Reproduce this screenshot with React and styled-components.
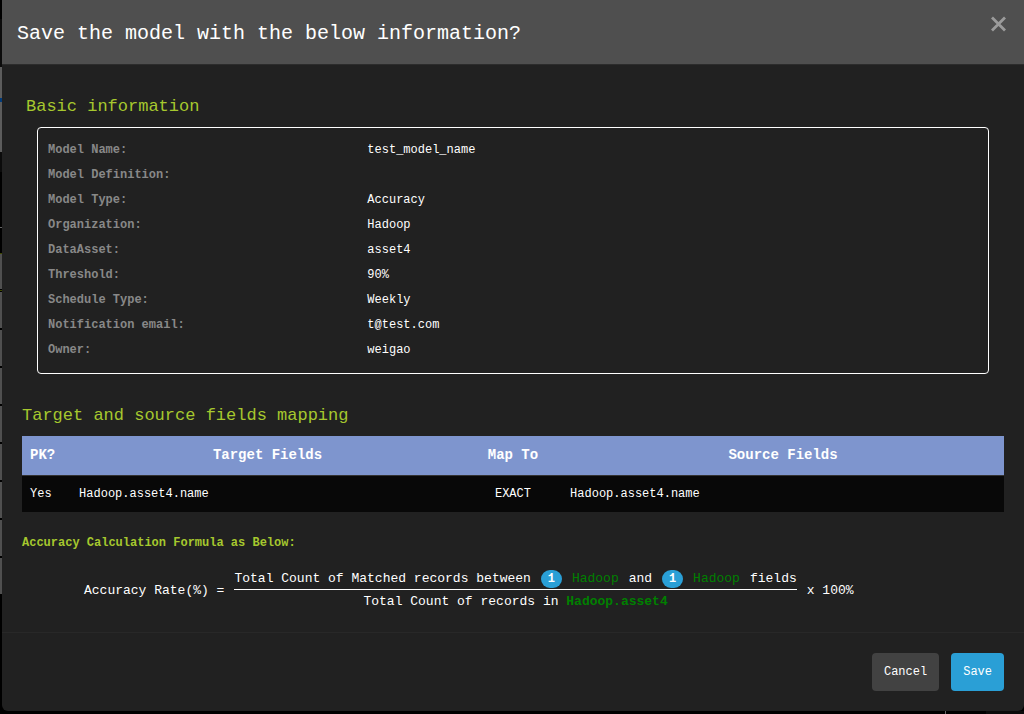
import React from "react";
import styled, { createGlobalStyle } from "styled-components";

const GlobalStyle = createGlobalStyle`
  *, *::before, *::after { box-sizing: border-box; }
  body {
    margin: 0;
    background: #000;
    color: #fff;
    font: 12px/16px "Liberation Mono", "Noto Sans CJK SC", monospace;
  }
`;

const strip = (from, to, color) =>
  `linear-gradient(${color}, ${color}) 0 ${from}px / 2px ${to - from}px no-repeat`;

const Backdrop = styled.div`
  min-height: 100vh;
  padding: 0 0 3px 2px;
  background: ${[
    strip(98, 102, "#003a7a"),
    strip(67, 152, "#5c5c5c"),
    strip(19, 172, "#0b0b0b"),
    strip(227, 228, "#666"),
    strip(253, 254, "#3f4a00"),
    strip(290, 291, "#3f4a00"),
    ...[253, 292, 330, 368, 406, 444, 482, 520, 558].map((y) =>
      strip(y, y + 36, "#505050")
    ),
    "linear-gradient(#666, #666) right 78px bottom 0 / 1px 3px no-repeat",
    "linear-gradient(#0b0b0b, #0b0b0b) right 0 bottom 0 / 38px 3px no-repeat",
  ].join(", ")};
`;

const Dialog = styled.section`
  display: flex;
  flex-direction: column;
  min-height: calc(100vh - 3px);
  background: #212121;
  border-radius: 0 0 6px 6px;
  overflow: hidden;
`;

const Header = styled.header`
  display: flex;
  justify-content: space-between;
  align-items: flex-start;
  padding: 16px 15px 12px;
  background: #4f4f4f;
  border-bottom: 1px solid #2c2c2c;
`;

const Title = styled.h1`
  margin: 0;
  font-size: 20px;
  line-height: 36px;
  font-weight: 400;
`;

const CloseButton = styled.button`
  display: flex;
  padding: 0;
  border: 0;
  background: none;
  color: #9b9b9b;
  cursor: pointer;
`;

const Body = styled.div`
  flex: 1;
  padding: 30px 20px 18px;
`;

const SectionTitle = styled.h2`
  margin: 0;
  padding-left: ${(p) => (p.$inset ? "4px" : "0")};
  color: #a6c82e;
  font-size: 17px;
  line-height: 24px;
  font-weight: 400;
`;

const InfoPanel = styled.dl`
  margin: 8px 15px 30px;
  padding: 10px 10px;
  border: 1px solid #fff;
  border-radius: 4px;
`;

const InfoRow = styled.div`
  display: grid;
  grid-template-columns: 1fr 2fr;
  column-gap: 14px;
  min-height: 25px;
  line-height: 25px;
`;

const InfoLabel = styled.dt`
  color: #888;
  font-weight: 700;
`;

const InfoValue = styled.dd`
  margin: 0;
`;

const MappingTable = styled.table`
  width: 100%;
  margin: 8px 0 22px;
  border-collapse: collapse;
  table-layout: fixed;
`;

const HeadCell = styled.th`
  width: ${(p) => p.$width};
  height: 39px;
  padding: 0 8px;
  background: #7e95ce;
  border-bottom: 1px solid #333;
  font-size: 14px;
  text-align: ${(p) => p.$align || "center"};
`;

const Cell = styled.td`
  height: 37px;
  padding: 0 8px;
  background: #080808;
  text-align: ${(p) => p.$align || "left"};
`;

const FormulaTitle = styled.h3`
  margin: 0;
  color: #a6c82e;
  font-size: 12px;
  line-height: 18px;
`;

const Formula = styled.div`
  display: flex;
  align-items: center;
  gap: 10px;
  margin: 16px 0 0 62px;
  font-size: 13px;
  white-space: nowrap;
`;

const Fraction = styled.div`
  text-align: center;
`;

const Numerator = styled.div`
  display: flex;
  align-items: center;
  gap: 10px;
  height: 22px;
  border-bottom: 1px solid #fff;
`;

const Denominator = styled.div`
  line-height: 24px;
`;

const Badge = styled.span`
  width: 21px;
  height: 18px;
  border-radius: 10px;
  background: #2a9fd6;
  font-size: 12px;
  line-height: 18px;
  font-weight: 700;
  text-align: center;
`;

const Source = styled.span`
  color: green;
  font-weight: ${(p) => (p.$strong ? 700 : 400)};
`;

const Footer = styled.footer`
  display: flex;
  justify-content: flex-end;
  gap: 12px;
  padding: 20px;
  border-top: 1px solid #282828;
`;

const Button = styled.button`
  height: 38px;
  padding: 0 12px;
  border: 0;
  border-radius: 4px;
  background: ${(p) => (p.$primary ? "#2a9fd6" : "#424242")};
  color: #fff;
  font: inherit;
  cursor: pointer;
`;

const info = [
  ["Model Name:", "test_model_name"],
  ["Model Definition:", ""],
  ["Model Type:", "Accuracy"],
  ["Organization:", "Hadoop"],
  ["DataAsset:", "asset4"],
  ["Threshold:", "90%"],
  ["Schedule Type:", "Weekly"],
  ["Notification email:", "t@test.com"],
  ["Owner:", "weigao"],
];

export default function App() {
  return (
    <>
      <GlobalStyle />
      <Backdrop>
        <Dialog role="dialog" aria-labelledby="dialog-title">
          <Header>
            <Title id="dialog-title">Save the model with the below information?</Title>
            <CloseButton type="button" aria-label="Close">
              <svg width="21" height="16" viewBox="0 0 21 16" aria-hidden="true">
                <path
                  d="M4 1.5 L17 14.5 M17 1.5 L4 14.5"
                  stroke="currentColor"
                  strokeWidth="2.8"
                />
              </svg>
            </CloseButton>
          </Header>
          <Body>
            <SectionTitle $inset>Basic information</SectionTitle>
            <InfoPanel>
              {info.map(([label, value]) => (
                <InfoRow key={label}>
                  <InfoLabel>{label}</InfoLabel>
                  <InfoValue>{value}</InfoValue>
                </InfoRow>
              ))}
            </InfoPanel>
            <SectionTitle>Target and source fields mapping</SectionTitle>
            <MappingTable>
              <thead>
                <tr>
                  <HeadCell $width="5%" $align="left">PK?</HeadCell>
                  <HeadCell $width="40%">Target Fields</HeadCell>
                  <HeadCell $width="10%">Map To</HeadCell>
                  <HeadCell $width="45%">Source Fields</HeadCell>
                </tr>
              </thead>
              <tbody>
                <tr>
                  <Cell>Yes</Cell>
                  <Cell>Hadoop.asset4.name</Cell>
                  <Cell $align="center">EXACT</Cell>
                  <Cell>Hadoop.asset4.name</Cell>
                </tr>
              </tbody>
            </MappingTable>
            <FormulaTitle>Accuracy Calculation Formula as Below:</FormulaTitle>
            <Formula>
              <span>Accuracy Rate(%) =</span>
              <Fraction>
                <Numerator>
                  <span>Total Count of Matched records between</span>
                  <Badge>1</Badge>
                  <Source>Hadoop</Source>
                  <span>and</span>
                  <Badge>1</Badge>
                  <Source>Hadoop</Source>
                  <span>fields</span>
                </Numerator>
                <Denominator>
                  Total Count of records in <Source $strong>Hadoop.asset4</Source>
                </Denominator>
              </Fraction>
              <span>x 100%</span>
            </Formula>
          </Body>
          <Footer>
            <Button type="button">Cancel</Button>
            <Button type="button" $primary>Save</Button>
          </Footer>
        </Dialog>
      </Backdrop>
    </>
  );
}
